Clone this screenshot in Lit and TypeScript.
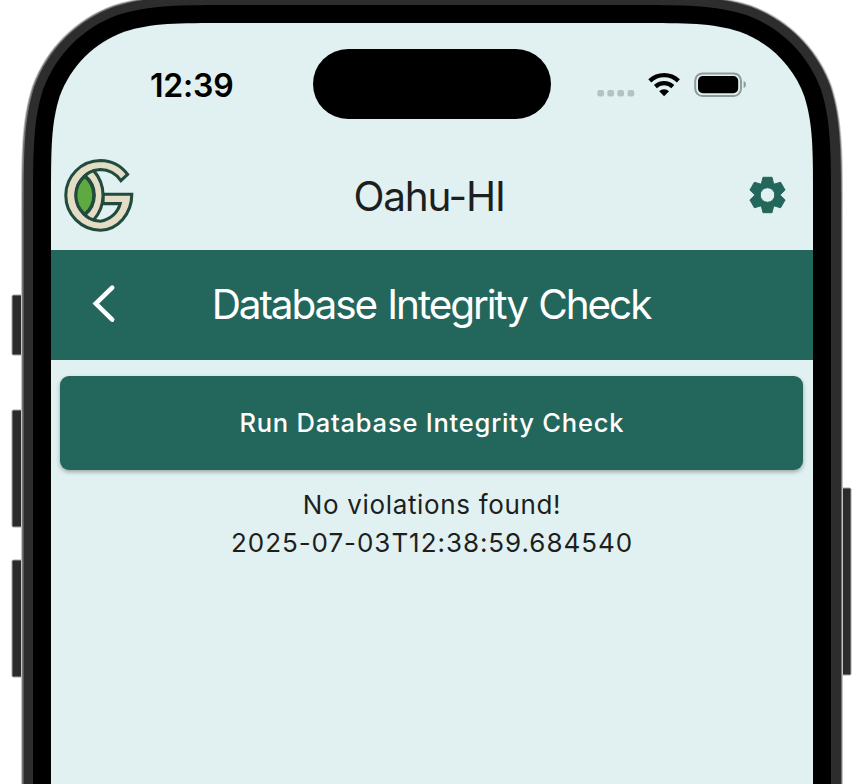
import { LitElement, html, css, svg } from "lit";
import { customElement } from "lit/decorators.js";

/** Continuous-curvature top corners; the sides run straight down past the window. */
function shellPath(left: number, right: number, top: number, r: number): string {
  const bottom = 800;
  const L = (x: number, y: number) => `${(left + x * r).toFixed(2)} ${(top + y * r).toFixed(2)}`;
  const R = (x: number, y: number) => `${(right - x * r).toFixed(2)} ${(top + y * r).toFixed(2)}`;
  return [
    `M${left} ${bottom}`,
    `L${L(0, 1.5287)}`,
    `C${L(0, 1.0885)} ${L(0, 0.8684)} ${L(0.0749, 0.6315)}`,
    `C${L(0.169, 0.3728)} ${L(0.3728, 0.169)} ${L(0.6315, 0.0749)}`,
    `C${L(0.8684, 0)} ${L(1.0885, 0)} ${L(1.5287, 0)}`,
    `L${R(1.5287, 0)}`,
    `C${R(1.0885, 0)} ${R(0.8684, 0)} ${R(0.6315, 0.0749)}`,
    `C${R(0.3728, 0.169)} ${R(0.169, 0.3728)} ${R(0.0749, 0.6315)}`,
    `C${R(0, 0.8684)} ${R(0, 1.0885)} ${R(0, 1.5287)}`,
    `L${right} ${bottom}Z`,
  ].join("");
}

/** Six-toothed cog around the origin with a round hole. */
function cogPath(): string {
  const tooth = [[-6, -11.7], [-4.5, -17.7], [4.5, -17.7], [6, -11.7]];
  const points: string[] = [];
  for (let i = 0; i < 6; i++) {
    const a = (i * Math.PI) / 3;
    for (const [x, y] of tooth) {
      points.push(`${(x * Math.cos(a) - y * Math.sin(a)).toFixed(2)} ${(x * Math.sin(a) + y * Math.cos(a)).toFixed(2)}`);
    }
  }
  return `M${points.join("L")}ZM7.3 0A7.3 7.3 0 1 0 -7.3 0A7.3 7.3 0 1 0 7.3 0Z`;
}

const sideKeys = [
  { x: 12, y: 295, w: 12, h: 60 },
  { x: 12, y: 410, w: 12, h: 117 },
  { x: 12, y: 560, w: 12, h: 117 },
  { x: 840, y: 488, w: 11, h: 187 },
];

@customElement("phone-shell")
class PhoneShell extends LitElement {
  static styles = css`
    :host { display: block; width: 864px; height: 784px; }
    .art { display: block; }
    .key { fill: #2b2b2b; stroke: #a6a6a6; stroke-width: 1; }
    .halo { fill: #c4c4c4; }
    .edge { fill: #757575; }
    .band { fill: #2d2d2d; }
    .bezel { fill: #000; }
    .glass { fill: #e1f1f1; }
  `;
  render() {
    return html`<svg class="art" width="864" height="784" viewBox="0 0 864 784" aria-hidden="true">
      ${sideKeys.map((k) => svg`<rect class="key" x=${k.x} y=${k.y} width=${k.w} height=${k.h} rx="1.5"></rect>`)}
      <path class="halo" d=${shellPath(21, 843, -6, 146)}></path>
      <path class="edge" d=${shellPath(22, 842, -5, 145)}></path>
      <path class="band" d=${shellPath(23.6, 841, -4, 143.5)}></path>
      <path class="bezel" d=${shellPath(33, 831, 5, 134)}></path>
      <path class="glass" d=${shellPath(51, 813, 23, 116)}></path>
    </svg>`;
  }
}

@customElement("status-bar")
class StatusBar extends LitElement {
  static styles = css`
    :host { display: grid; grid-template-columns: 262px 238px 262px; height: 120px; }
    .time {
      padding: 43px 0 0 99px; font-size: 32px; line-height: 40px; font-weight: 600;
      color: #000; letter-spacing: -0.2px; white-space: nowrap;
    }
    .island { height: 70px; margin-top: 26.4px; border-radius: 35px; background: #000; }
    .signals { display: block; }
    .dot { fill: #b5c2c2; }
    .wave { fill: none; stroke: #000; stroke-width: 4.3; }
    .case { fill: none; stroke: #8f9a9a; stroke-width: 2; }
    .nub { fill: #8f9a9a; }
  `;
  render() {
    return html`
      <div class="time">12:39</div>
      <div class="island"></div>
      <svg class="signals" width="262" height="120" viewBox="551 23 262 120" aria-hidden="true">
        ${[597.4, 607.4, 617.4, 627.6].map((x) => svg`<rect class="dot" x=${x} y="90" width="6.6" height="6.4" rx="2"></rect>`)}
        <path class="wave" d="M649.8 80.9A20.7 20.7 0 0 1 678.4 80.9"></path>
        <path class="wave" d="M655.4 86.6A12.7 12.7 0 0 1 672.8 86.6"></path>
        <path d="M659.2 91.2A7.2 7.2 0 0 1 669 91.2L664.1 96.2Z"></path>
        <rect class="case" x="695.2" y="73.4" width="45.8" height="22.6" rx="7.4"></rect>
        <rect x="698" y="76" width="40.2" height="17.2" rx="4.8"></rect>
        <path class="nub" d="M743.6 80.8Q746 82 746 84.4Q746 86.8 743.6 88Z"></path>
      </svg>`;
  }
}

@customElement("app-root")
class AppRoot extends LitElement {
  static styles = css`
    :host {
      display: block; position: relative; width: 864px; height: 784px; overflow: hidden;
      background: #fff; font-family: Inter, "Liberation Sans", sans-serif; color: #1d1f1f;
    }
    .shell { position: absolute; inset: 0; }
    .screen { position: relative; margin: 0 51px; padding-top: 23px; width: 762px; box-sizing: border-box; }
    .header, .title-bar { display: grid; grid-template-columns: 96px 1fr 96px; align-items: center; }
    .header { height: 107px; }
    .heading {
      margin: 0; font-weight: 400; font-size: 40.5px; line-height: 50px; text-align: center;
      white-space: nowrap; letter-spacing: -1.2px;
    }
    .header .heading { padding-right: 6px; }
    .brand { display: block; margin: 0 0 3px 8px; }
    .gear {
      display: block; margin: -3px 0 0 30px; fill: #23675c; fill-rule: evenodd;
      stroke: #23675c; stroke-width: 1; stroke-linejoin: round;
    }
    .title-bar { height: 110px; background: #23675c; color: #fff; }
    .title-bar .heading { padding-right: 2px; letter-spacing: -2.1px; word-spacing: 2px; }
    .back { display: block; margin-left: 38px; }
    .content { padding: 16px 10px 0; }
    .run {
      display: block; width: 743px; height: 94px; margin-left: -0.7px; border: 0; border-radius: 9px;
      background: #23675c; color: #fff; font: 500 25.5px/30px Inter, "Liberation Sans", sans-serif;
      letter-spacing: 0.78px; box-shadow: 0 2px 4px rgb(0 0 0 / 0.32); white-space: nowrap;
    }
    .result {
      margin: 16px 0 0; text-align: center; font-size: 26px; line-height: 38px; letter-spacing: 0.95px;
    }
    .line { display: block; white-space: nowrap; }
    .message { letter-spacing: 0.65px; }
    .outline { stroke: #204b3d; stroke-width: 3.1; stroke-linejoin: miter; }
    .cream { fill: #e5dcc5; }
    .leaf { fill: #5eaa41; }
  `;
  render() {
    return html`
      <phone-shell class="shell"></phone-shell>
      <div class="screen">
        <status-bar></status-bar>
        <header class="header">
          <svg class="brand" width="80" height="80" viewBox="59 155 80 80" aria-hidden="true">
            <path class="outline cream" d="M127.6 174.4L120.9 180.6A25.9 25.9 0 0 0 100.3 169.5A25.9 25.9 0 0 0 100.3 221.2A24 24 0 0 0 120.2 203.6L103 203.6L103 194.3L131.8 194.3A32 36 0 0 1 100.5 230.2A34.8 34.8 0 0 1 65.8 195.3A34.8 34.8 0 0 1 100.5 160.5A34.8 34.8 0 0 1 127.6 174.4Z"></path>
            <path class="outline cream" d="M84.8 175.8A26 26 0 0 1 93.6 170.6A37 37 0 0 1 93.6 220A26 26 0 0 1 84.8 214.8A24.8 24.8 0 0 0 84.8 175.8Z"></path>
            <path class="outline leaf" d="M84.8 176.2A24.8 24.8 0 0 0 84.8 214.4A24.8 24.8 0 0 0 84.8 176.2Z"></path>
          </svg>
          <h1 class="heading">Oahu-HI</h1>
          <svg class="gear" width="41" height="40" viewBox="-20.5 -20 41 40" aria-hidden="true">
            <path d=${cogPath()}></path>
          </svg>
        </header>
        <div class="title-bar">
          <svg class="back" width="30" height="42" viewBox="89 284 30 42" fill="none" stroke="#fff" stroke-width="4.6" stroke-linecap="round" aria-hidden="true">
            <path d="M112.2 287.6L95.8 303.6L112.2 319.6"></path>
          </svg>
          <h2 class="heading">Database Integrity Check</h2>
        </div>
        <main class="content">
          <button class="run">Run Database Integrity Check</button>
          <p class="result">
            <span class="line message">No violations found!</span>
            <span class="line">2025-07-03T12:38:59.684540</span>
          </p>
        </main>
      </div>`;
  }
}
